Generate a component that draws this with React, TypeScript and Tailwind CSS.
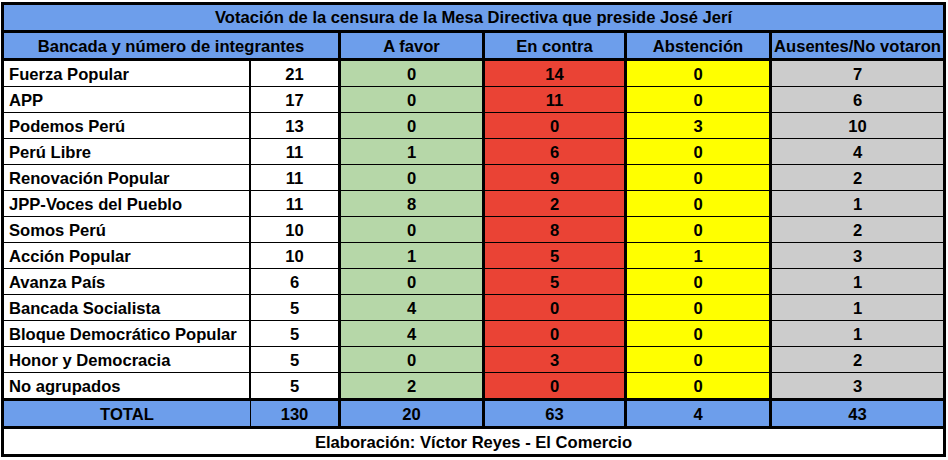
import React from 'react';

type Bancada = {
  name: string;
  total: number;
  favor: number;
  contra: number;
  abstencion: number;
  ausentes: number;
};

const rows: Bancada[] = [
  { name: 'Fuerza Popular', total: 21, favor: 0, contra: 14, abstencion: 0, ausentes: 7 },
  { name: 'APP', total: 17, favor: 0, contra: 11, abstencion: 0, ausentes: 6 },
  { name: 'Podemos Perú', total: 13, favor: 0, contra: 0, abstencion: 3, ausentes: 10 },
  { name: 'Perú Libre', total: 11, favor: 1, contra: 6, abstencion: 0, ausentes: 4 },
  { name: 'Renovación Popular', total: 11, favor: 0, contra: 9, abstencion: 0, ausentes: 2 },
  { name: 'JPP-Voces del Pueblo', total: 11, favor: 8, contra: 2, abstencion: 0, ausentes: 1 },
  { name: 'Somos Perú', total: 10, favor: 0, contra: 8, abstencion: 0, ausentes: 2 },
  { name: 'Acción Popular', total: 10, favor: 1, contra: 5, abstencion: 1, ausentes: 3 },
  { name: 'Avanza País', total: 6, favor: 0, contra: 5, abstencion: 0, ausentes: 1 },
  { name: 'Bancada Socialista', total: 5, favor: 4, contra: 0, abstencion: 0, ausentes: 1 },
  { name: 'Bloque Democrático Popular', total: 5, favor: 4, contra: 0, abstencion: 0, ausentes: 1 },
  { name: 'Honor y Democracia', total: 5, favor: 0, contra: 3, abstencion: 0, ausentes: 2 },
  { name: 'No agrupados', total: 5, favor: 2, contra: 0, abstencion: 0, ausentes: 3 },
];

// spreadsheet-ish cell: text sits a bit low, like Sheets' bottom alignment
const cell = 'flex h-[25px] items-center justify-center pt-[2px]';
const blue = 'bg-[#6d9eeb]';

const DataRow: React.FC<{ row: Bancada }> = ({ row }) => (
  <div className="flex">
    <div className="flex h-[25px] w-[245px] items-center bg-white pl-[5px] pt-[2px]">{row.name}</div>
    <div className={`${cell} ml-[2px] w-[87px] bg-white`}>{row.total}</div>
    <div className={`${cell} ml-[3px] w-[141px] bg-[#b6d7a8]`}>{row.favor}</div>
    <div className={`${cell} ml-[3px] w-[139px] bg-[#ea4335]`}>{row.contra}</div>
    <div className={`${cell} ml-[3px] w-[142px] bg-[#ffff00]`}>{row.abstencion}</div>
    <div className={`${cell} ml-[3px] w-[171px] bg-[#cccccc]`}>{row.ausentes}</div>
  </div>
);

export default function App() {
  const sum = (k: keyof Omit<Bancada, 'name'>) => rows.reduce((acc, r) => acc + r[k], 0);

  return (
    <div className="h-[460px] w-[948px] bg-white pl-px pt-[2px] font-['Liberation_Sans',Arial,sans-serif] text-[16.6px] leading-[20px] font-bold text-black">
      <div className="flex w-[945px] flex-col bg-black p-[3px]">
        {/* Title */}
        <div className={`flex h-[25px] items-center justify-center pt-px ${blue}`}>
          Votación de la censura de la Mesa Directiva que preside José Jerí
        </div>

        {/* Column headers */}
        <div className="mt-[3px] flex">
          <div className={`${cell} ${blue} w-[334px]`}>Bancada y número de integrantes</div>
          <div className={`${cell} ${blue} ml-[3px] w-[141px]`}>A favor</div>
          <div className={`${cell} ${blue} ml-[3px] w-[139px]`}>En contra</div>
          <div className={`${cell} ${blue} ml-[3px] w-[142px]`}>Abstención</div>
          <div className={`${cell} ${blue} ml-[3px] w-[171px]`}>Ausentes/No votaron</div>
        </div>

        {/* Bancadas */}
        <div className="mt-[3px] flex flex-col gap-px">
          {rows.map((r) => (
            <DataRow key={r.name} row={r} />
          ))}
        </div>

        {/* Totals */}
        <div className="mt-[3px] flex">
          <div className={`${cell} ${blue} w-[246px]`}>TOTAL</div>
          <div className={`${cell} ${blue} ml-px w-[87px]`}>{sum('total')}</div>
          <div className={`${cell} ${blue} ml-[3px] w-[141px]`}>{sum('favor')}</div>
          <div className={`${cell} ${blue} ml-[3px] w-[139px]`}>{sum('contra')}</div>
          <div className={`${cell} ${blue} ml-[3px] w-[142px]`}>{sum('abstencion')}</div>
          <div className={`${cell} ${blue} ml-[3px] w-[171px]`}>{sum('ausentes')}</div>
        </div>

        {/* Credit */}
        <div className={`${cell} mt-[3px] bg-white`}>Elaboración: Víctor Reyes - El Comercio</div>
      </div>
    </div>
  );
}
